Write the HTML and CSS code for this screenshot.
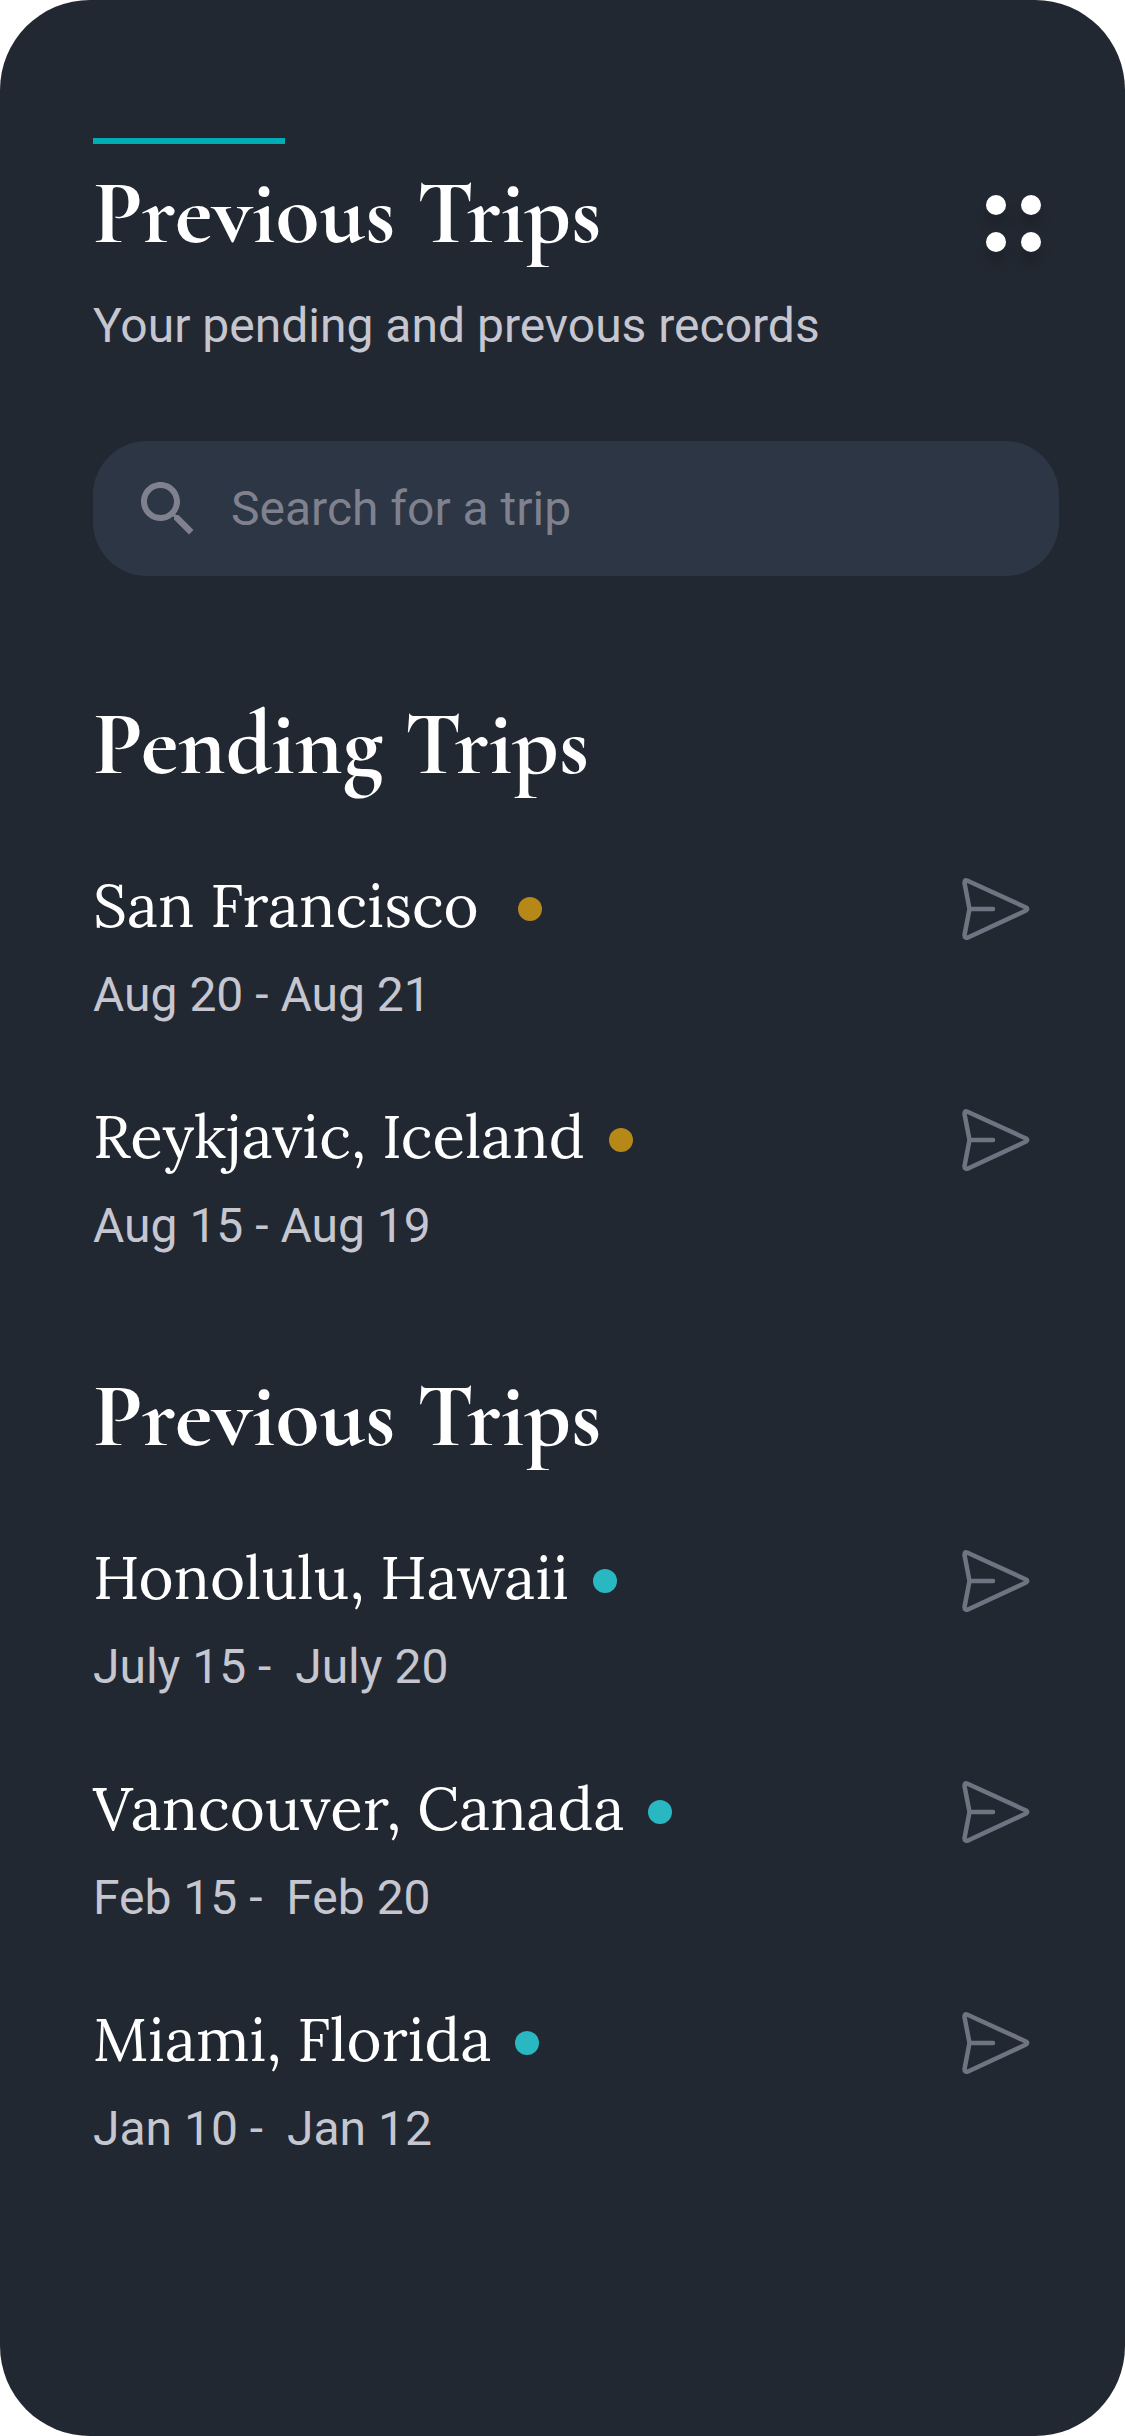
FILE: index.html
```html
<!DOCTYPE html>
<html lang="en">
<head>
<meta charset="utf-8">
<meta name="viewport" content="width=device-width, initial-scale=1">
<title>Previous Trips</title>
<link rel="stylesheet" href="styles.css">
</head>
<body>
<svg class="sprite" aria-hidden="true">
  <symbol id="send" viewBox="0 0 68 64">
    <path d="M5 3.500 Q2.500 2.500 2.500 6 L7.500 32 L2.500 58 Q2.500 61.500 6 60.500 L64 33.500 Q66.500 32 64 30.500 Z M7.500 32 H31" fill="none" stroke="currentColor" stroke-width="4.500" stroke-linecap="round" stroke-linejoin="round"/>
  </symbol>
</svg>
<main class="screen">
  <header class="header">
    <div class="intro">
      <div class="accent"></div>
      <h1 class="title">Previous Trips</h1>
      <p class="subtitle">Your pending and prevous records</p>
    </div>
    <button class="menu" type="button" aria-label="Menu">
      <span class="menu-dot"></span><span class="menu-dot"></span><span class="menu-dot"></span><span class="menu-dot"></span>
    </button>
  </header>

  <label class="search">
    <svg class="search-icon" viewBox="0 0 24 24" aria-hidden="true"><path fill="currentColor" d="M15.500 14h-.79l-.28-.27C15.410 12.590 16 11.110 16 9.500 16 5.910 13.090 3 9.500 3S3 5.910 3 9.500 5.910 16 9.500 16c1.610 0 3.090-.59 4.230-1.570l.27.28v.79l5 4.990L20.490 19l-4.990-5zm-6 0C7.010 14 5 11.990 5 9.500S7.010 5 9.500 5 14 7.010 14 9.500 11.990 14 9.500 14z"/></svg>
    <input class="search-input" type="text" placeholder="Search for a trip" aria-label="Search for a trip">
  </label>

  <section class="section">
    <h2 class="title">Pending Trips</h2>
    <ul class="trips">
      <li class="trip">
        <div class="details">
          <h3 class="place">San Francisco&nbsp;<span class="status pending"></span></h3>
          <p class="dates">Aug 20 - Aug 21</p>
        </div>
        <button class="send" type="button" aria-label="Send San Francisco"><svg class="send-icon"><use href="#send"/></svg></button>
      </li>
      <li class="trip">
        <div class="details">
          <h3 class="place">Reykjavic, Iceland<span class="status pending"></span></h3>
          <p class="dates">Aug 15 - Aug 19</p>
        </div>
        <button class="send" type="button" aria-label="Send Reykjavic"><svg class="send-icon"><use href="#send"/></svg></button>
      </li>
    </ul>
  </section>

  <section class="section">
    <h2 class="title">Previous Trips</h2>
    <ul class="trips">
      <li class="trip">
        <div class="details">
          <h3 class="place">Honolulu, Hawaii<span class="status done"></span></h3>
          <p class="dates">July 15 -&nbsp; July 20</p>
        </div>
        <button class="send" type="button" aria-label="Send Honolulu"><svg class="send-icon"><use href="#send"/></svg></button>
      </li>
      <li class="trip">
        <div class="details">
          <h3 class="place">Vancouver, Canada<span class="status done"></span></h3>
          <p class="dates">Feb 15 -&nbsp; Feb 20</p>
        </div>
        <button class="send" type="button" aria-label="Send Vancouver"><svg class="send-icon"><use href="#send"/></svg></button>
      </li>
      <li class="trip">
        <div class="details">
          <h3 class="place">Miami, Florida<span class="status done"></span></h3>
          <p class="dates">Jan 10 -&nbsp; Jan 12</p>
        </div>
        <button class="send" type="button" aria-label="Send Miami"><svg class="send-icon"><use href="#send"/></svg></button>
      </li>
    </ul>
  </section>
</main>
</body>
</html>
```
FILE: styles.css
```css
* {
  box-sizing: border-box;
  margin: 0;
  padding: 0;
}

body {
  background: #fff;
  font-family: Roboto, "Liberation Sans", sans-serif;
  font-size: 48px;
  line-height: 64px;
  color: #fff;
}

button {
  border: 0;
  background: none;
  cursor: pointer;
}

.sprite {
  display: none;
}

.screen {
  min-height: 100vh;
  padding: 138px 66px 138px 93px;
  border-radius: 90px;
  background: #222831;
}

.header {
  display: flex;
  justify-content: space-between;
  align-items: flex-start;
}

.accent {
  width: 192px;
  height: 6px;
  margin-bottom: 24px;
  background: #00adb5;
}

.title {
  font-family: "Cormorant Garamond", Cormorant, "Liberation Serif", serif;
  font-size: 90px;
  font-weight: 700;
  line-height: 92px;
}

.subtitle {
  margin-top: 34px;
  color: #c5c6d0;
}

.menu {
  display: grid;
  grid-template-columns: 20px 20px;
  gap: 17px 15px;
  margin: 57px 18px 0 0;
}

.menu-dot {
  height: 20px;
  border-radius: 50%;
  background: #fff;
  box-shadow: 0 12px 12px rgba(0, 0, 0, 0.16);
}

.search {
  display: flex;
  align-items: center;
  gap: 27px;
  height: 135px;
  margin-top: 83px;
  padding: 0 39px;
  border-radius: 54px;
  background: #2d3644;
}

.search-icon {
  flex: none;
  width: 72px;
  height: 72px;
  color: #7f818f;
}

.search-input {
  flex: 1;
  min-width: 0;
  border: 0;
  outline: 0;
  background: none;
  font: inherit;
  color: #fff;
}

.search-input::placeholder {
  color: #7f818f;
  opacity: 1;
}

.section {
  margin-top: 113px;
}

.search + .section {
  margin-top: 123px;
}

.trips {
  display: grid;
  gap: 67px;
  margin-top: 72px;
  list-style: none;
}

.trip {
  display: flex;
  justify-content: space-between;
  align-items: flex-start;
}

.place {
  display: flex;
  align-items: center;
  font-family: Lora, "Liberation Serif", serif;
  font-size: 60px;
  font-weight: 400;
  line-height: 84px;
}

.status {
  width: 24px;
  height: 24px;
  margin: 8px 0 0 24px;
  border-radius: 50%;
}

.pending {
  background: #b58818;
}

.done {
  background: #29b7c1;
}

.dates {
  margin-top: 16px;
  color: #c5c6d0;
}

.send {
  margin: 14px 29px 0 0;
  color: #6f7482;
}

.send-icon {
  display: block;
  width: 68px;
  height: 64px;
}
```
